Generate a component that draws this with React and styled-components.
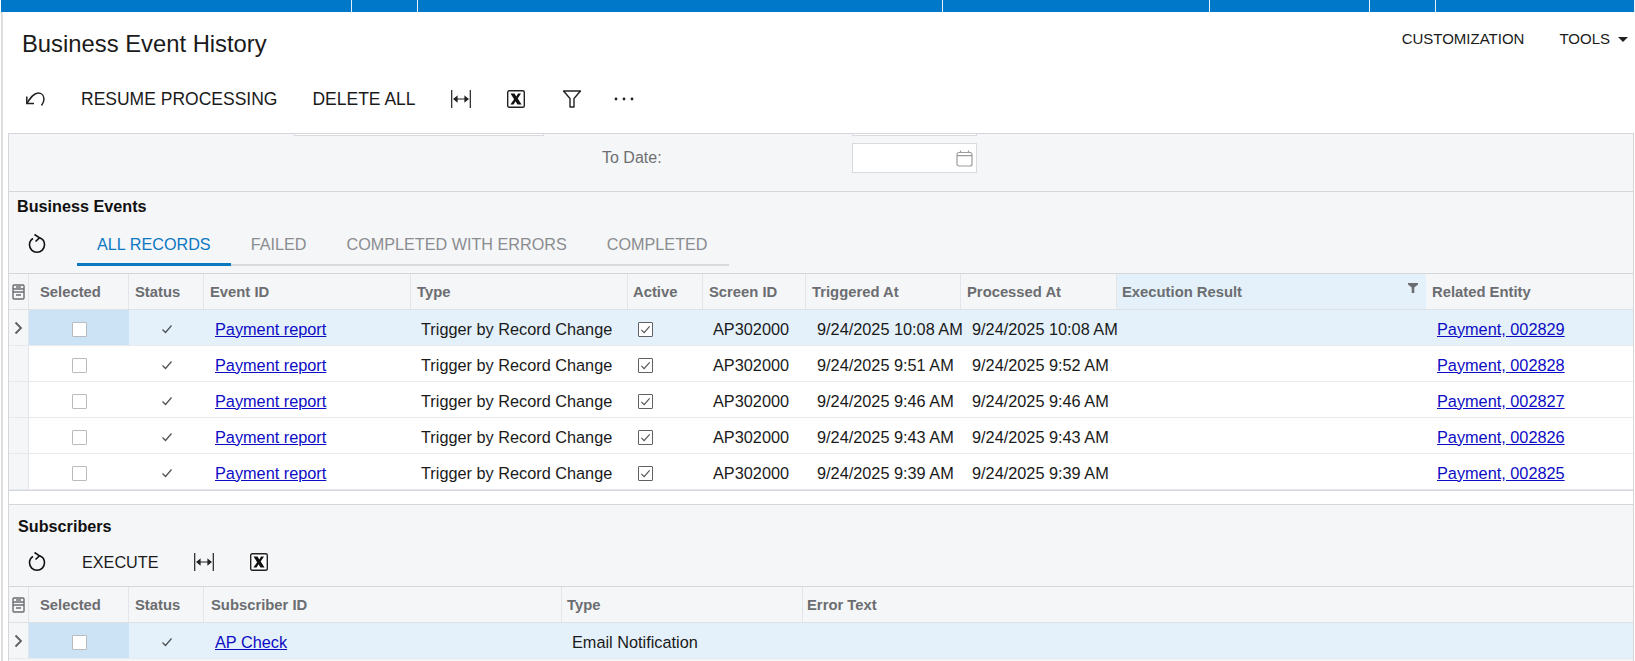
import styled, { createGlobalStyle } from 'styled-components'

const GlobalStyle = createGlobalStyle`
    html, body {
        margin: 0;
        padding: 0;
        background: #fff;
        overflow: hidden;
    }
    body {
        font-family: "Liberation Sans", Arial, sans-serif;
        color: #1a1a1a;
    }
`

const Page = styled.div`
    width: 1635px;
    height: 661px;
    overflow: hidden;
`
const TopBar = styled.div`
    display: flex;
    height: 12px;
    margin-left: 1px;
    background: #0078c9;
`
const TopSegment = styled.div`
    width: ${p => p.$width}px;
    height: 12px;
    box-sizing: border-box;
    border-right: 1px solid #e3f0fa;
`
const Shell = styled.div`
    border-left: 2px solid #dddddd;
    margin-left: 1px;
    padding: 0 1px 0 5px;
    height: 649px;
    box-sizing: border-box;
`
const TitleRow = styled.div`
    display: flex;
    justify-content: space-between;
    height: 65px;
    padding-left: 14px;
`
const Title = styled.h1`
    margin: 0;
    padding-top: 18px;
    font-size: 23.8px;
    line-height: 28px;
    font-weight: 400;
`
const TopActions = styled.div`
    display: flex;
    align-items: flex-start;
    padding-top: 18px;
    font-size: 15px;
    line-height: 18px;
`
const TopAction = styled.span`
    margin-left: ${p => p.$gap}px;
    display: flex;
    align-items: center;
`
const Caret = styled.i`
    width: 0;
    height: 0;
    margin: 0 6px 0 8px;
    border-left: 5px solid transparent;
    border-right: 5px solid transparent;
    border-top: 5px solid #222;
`
const Toolbar = styled.div`
    display: flex;
    align-items: center;
    height: ${p => p.$height || 44}px;
    box-sizing: border-box;
    padding-left: ${p => p.$inset}px;
    padding-top: ${p => p.$top || 0}px;
`
const ToolText = styled.span`
    margin-left: ${p => p.$gap}px;
    font-size: ${p => p.$size || 17.5}px;
    line-height: 22px;
    white-space: nowrap;
`
const ToolIcon = styled.span`
    display: flex;
    margin-left: ${p => p.$gap || 0}px;
`
const Panel = styled.div`
    margin-top: 12px;
    border: 1px solid #d4d6d9;
    border-bottom: none;
    background: #f5f6f8;
    height: 528px;
    box-sizing: border-box;
`
const FormArea = styled.div`
    height: 57px;
    border-bottom: 1px solid #d4d6d9;
`
const ClippedRow = styled.div`
    display: flex;
    height: 2px;
`
const ClippedInput = styled.div`
    margin-left: ${p => p.$left}px;
    width: ${p => p.$width}px;
    height: 2px;
    box-sizing: border-box;
    background: #fff;
    border: 1px solid #d8dadd;
    border-top: none;
`
const FormRow = styled.div`
    display: flex;
    align-items: center;
    margin-top: 7px;
    height: 30px;
`
const FormLabel = styled.span`
    margin-left: 593px;
    width: 250px;
    font-size: 16px;
    color: #6d6f72;
`
const DateInput = styled.div`
    display: flex;
    align-items: center;
    justify-content: flex-end;
    width: 125px;
    height: 30px;
    box-sizing: border-box;
    padding-right: 3px;
    background: #fff;
    border: 1px solid #d8dadd;
`
const SectionTitle = styled.h2`
    margin: 0;
    padding: ${p => p.$top}px 0 0 ${p => p.$left}px;
    font-size: 16.2px;
    line-height: 18px;
    font-weight: 700;
    color: #111;
`
const TabsRow = styled.div`
    display: flex;
    align-items: flex-end;
    height: 51px;
    padding-left: 18px;
`
const RefreshSlot = styled.span`
    display: flex;
    width: 50px;
    align-self: flex-end;
    padding-bottom: 11px;
`
const Tabs = styled.div`
    display: flex;
    width: 652px;
    height: 40px;
    box-sizing: border-box;
    border-bottom: 2px solid #d8dadd;
`
const Tab = styled.div`
    height: 40px;
    box-sizing: border-box;
    padding: 8px 20px 0;
    font-size: 16.2px;
    line-height: 20px;
    white-space: nowrap;
    color: ${p => (p.$active ? '#0b78c2' : '#8a8c8f')};
    border-bottom: ${p => (p.$active ? '3px solid #0b78c2' : 'none')};
`
const Grid = styled.div`
    border-top: 1px solid #d4d6d9;
    margin-top: ${p => p.$top || 0}px;
    background: #fff;
`
const Row = styled.div`
    display: grid;
    grid-template-columns: ${p => p.$columns};
    height: 36px;
    box-sizing: border-box;
    border-bottom: 1px solid #e6eaee;
    background: ${p => (p.$current ? '#e4f1fa' : '#fff')};
`
const HeadRow = styled(Row)`
    background: #f5f6f8;
    border-bottom: 1px solid #dfe2e5;
`
const HeadCell = styled.div`
    display: flex;
    align-items: center;
    justify-content: space-between;
    padding: 1px 2px 0 ${p => p.$left || 6}px;
    box-sizing: border-box;
    border-right: ${p => (p.$last ? 'none' : '1px solid #e3e5e8')};
    background: ${p => (p.$filtered ? '#e4f1fa' : 'transparent')};
    font-size: 14.8px;
    font-weight: 700;
    color: #6b6d70;
    white-space: nowrap;
`
const FilterMark = styled.span`
    display: flex;
    align-self: flex-start;
    margin: 8px 6px 0 0;
`
const Gutter = styled.div`
    display: flex;
    align-items: center;
    justify-content: center;
    background: #f5f6f8;
    border-right: 1px solid #e3e5e8;
`
const Cell = styled.div`
    display: flex;
    align-items: center;
    justify-content: ${p => (p.$center ? 'center' : 'flex-start')};
    padding: 3px 0 0 ${p => (p.$center ? 0 : p.$left || 10)}px;
    font-size: 16.3px;
    white-space: nowrap;
    background: ${p => (p.$marked ? '#cbe3f5' : 'transparent')};
`
const RowLink = styled.a`
    color: #0c0cc4;
    text-decoration: underline;
`
const Box = styled.span`
    display: flex;
    align-items: center;
    justify-content: center;
    width: 15px;
    height: 15px;
    box-sizing: border-box;
    background: #fff;
    border: 1px solid ${p => (p.$checked ? '#5f6164' : '#b9bbbe')};
    border-radius: 1px;
`
const Spacer = styled.div`
    height: 13px;
    background: #fff;
    border-top: 1px solid #d4d6d9;
    border-bottom: 1px solid #d4d6d9;
`

const eventColumns = '20px 100px 75px 207px 217px 75px 103px 155px 156px 309px 207px'
const subscriberColumns = '20px 100px 75px 358px 241px 830px'

const events = [
    { triggered: '9/24/2025 10:08 AM', processed: '9/24/2025 10:08 AM', entity: 'Payment, 002829', current: true },
    { triggered: '9/24/2025 9:51 AM', processed: '9/24/2025 9:52 AM', entity: 'Payment, 002828' },
    { triggered: '9/24/2025 9:46 AM', processed: '9/24/2025 9:46 AM', entity: 'Payment, 002827' },
    { triggered: '9/24/2025 9:43 AM', processed: '9/24/2025 9:43 AM', entity: 'Payment, 002826' },
    { triggered: '9/24/2025 9:39 AM', processed: '9/24/2025 9:39 AM', entity: 'Payment, 002825' },
]

const segments = [351, 66, 525, 267, 160, 66, 199]

const UndoIcon = () => (
    <svg width="21" height="16" viewBox="0 0 21 16" fill="none" stroke="#222" strokeWidth="1.5">
        <path d="M1.8 12.5 C5 7.5 8.5 2 13 2 C16.5 2 19 4.5 19 8 C19 10.5 18 12.5 16.5 14.5" />
        <path d="M1.8 5.5 V12.5 H9" />
    </svg>
)

const RefreshIcon = () => (
    <svg width="20" height="22" viewBox="0 0 20 22" fill="none" stroke="#111" strokeWidth="1.6">
        <path d="M6 5.5 C3.5 7 2.5 9.2 2.5 11.8 C2.5 16 5.8 19.3 10 19.3 C14.2 19.3 17.5 16 17.5 11.8 C17.5 8.5 15.5 5.8 12.5 4.8" />
        <path d="M7.5 1.5 L12.5 4.8 L8.5 8.5" />
    </svg>
)

const FitIcon = () => (
    <svg width="20" height="20" viewBox="0 0 20 20" fill="none" stroke="#222" strokeWidth="1.2">
        <path d="M0.7 1 V19 M19.3 1 V19 M3 10 H17" />
        <path d="M6 7.6 L3 10 L6 12.4 Z M14 7.6 L17 10 L14 12.4 Z" fill="#222" />
    </svg>
)

const ExcelIcon = () => (
    <svg width="18" height="18" viewBox="0 0 18 18">
        <rect x="0.7" y="0.7" width="16.6" height="16.6" rx="1.5" fill="#fff" stroke="#222" strokeWidth="1.4" />
        <path d="M3.5 3.5 H7.5 L9.3 6.5 L11 3.5 H14 L10.7 8.4 L14.6 14.5 H10.5 L8.5 11.3 L6.6 14.5 H3.4 L7.1 9.2 Z" fill="#111" />
    </svg>
)

const FunnelIcon = () => (
    <svg width="20" height="18" viewBox="0 0 20 18" fill="none" stroke="#222" strokeWidth="1.4">
        <path d="M1.5 1 H18.5 L12 8.5 V17 H8 V8.5 Z" strokeLinejoin="round" />
    </svg>
)

const DotsIcon = () => (
    <svg width="20" height="4" viewBox="0 0 20 4" fill="#222">
        <circle cx="2" cy="2" r="1.4" />
        <circle cx="10" cy="2" r="1.4" />
        <circle cx="18" cy="2" r="1.4" />
    </svg>
)

const CalendarIcon = () => (
    <svg width="17" height="17" viewBox="0 0 17 17" fill="none" stroke="#9a9c9f" strokeWidth="1.2">
        <rect x="1" y="2.5" width="15" height="13.5" rx="2" />
        <path d="M1 5.6 H16 M4.5 0.5 V2.5 M12.5 0.5 V2.5" />
    </svg>
)

const CheckIcon = ({ size = 12, color = '#4c4e51' }) => (
    <svg width={size} height={size} viewBox="0 0 12 12" fill="none" stroke={color} strokeWidth="1.2">
        <path d="M1.5 6.5 L4.5 9.5 L10.5 2.5" />
    </svg>
)

const ColumnsIcon = () => (
    <svg width="13" height="16" viewBox="0 0 13 16" fill="none" stroke="#6b6d70" strokeWidth="1.4">
        <rect x="1" y="1" width="11" height="14" rx="1" />
        <path d="M1 5 H12 M1 8 H12 M4 11 H9" />
        <path d="M4 3 H9" />
    </svg>
)

const ChevronIcon = () => (
    <svg width="9" height="14" viewBox="0 0 9 14" fill="none" stroke="#5c5e61" strokeWidth="1.8">
        <path d="M1.5 1.5 L7 7 L1.5 12.5" />
    </svg>
)

const FilterMarkIcon = () => (
    <svg width="10" height="10" viewBox="0 0 10 10" fill="#6b6d70">
        <path d="M0 0 H10 V1.5 L6.3 4.5 V10 H3.7 V4.5 L0 1.5 Z" />
    </svg>
)

const HeadLead = () => (
    <>
        <Gutter><ColumnsIcon /></Gutter>
        <HeadCell $left={11}>Selected</HeadCell>
        <HeadCell>Status</HeadCell>
    </>
)

const RowLead = ({ current }) => (
    <>
        <Gutter>{current && <ChevronIcon />}</Gutter>
        <Cell $center $marked={current}><Box /></Cell>
        <Cell $center><CheckIcon /></Cell>
    </>
)

const App = () => {
    return (
        <Page>
            <GlobalStyle />
            <TopBar>
                {segments.map((width, i) => <TopSegment key={i} $width={width} />)}
            </TopBar>
            <Shell>
                <TitleRow>
                    <Title>Business Event History</Title>
                    <TopActions>
                        <TopAction>CUSTOMIZATION</TopAction>
                        <TopAction $gap={35}>TOOLS<Caret /></TopAction>
                    </TopActions>
                </TitleRow>
                <Toolbar $inset={17}>
                    <ToolIcon><UndoIcon /></ToolIcon>
                    <ToolText $gap={35}>RESUME PROCESSING</ToolText>
                    <ToolText $gap={35}>DELETE ALL</ToolText>
                    <ToolIcon $gap={35}><FitIcon /></ToolIcon>
                    <ToolIcon $gap={36}><ExcelIcon /></ToolIcon>
                    <ToolIcon $gap={37}><FunnelIcon /></ToolIcon>
                    <ToolIcon $gap={32}><DotsIcon /></ToolIcon>
                </Toolbar>
                <Panel>
                    <FormArea>
                        <ClippedRow>
                            <ClippedInput $left={285} $width={250} />
                            <ClippedInput $left={308} $width={125} />
                        </ClippedRow>
                        <FormRow>
                            <FormLabel>To Date:</FormLabel>
                            <DateInput><CalendarIcon /></DateInput>
                        </FormRow>
                    </FormArea>
                    <SectionTitle $top={5} $left={8}>Business Events</SectionTitle>
                    <TabsRow>
                        <RefreshSlot><RefreshIcon /></RefreshSlot>
                        <Tabs>
                            <Tab $active>ALL RECORDS</Tab>
                            <Tab>FAILED</Tab>
                            <Tab>COMPLETED WITH ERRORS</Tab>
                            <Tab>COMPLETED</Tab>
                        </Tabs>
                    </TabsRow>
                    <Grid $top={7}>
                        <HeadRow $columns={eventColumns}>
                            <HeadLead />
                            <HeadCell>Event ID</HeadCell>
                            <HeadCell>Type</HeadCell>
                            <HeadCell $left={5}>Active</HeadCell>
                            <HeadCell $left={6}>Screen ID</HeadCell>
                            <HeadCell>Triggered At</HeadCell>
                            <HeadCell>Processed At</HeadCell>
                            <HeadCell $left={5} $filtered $last>
                                Execution Result
                                <FilterMark><FilterMarkIcon /></FilterMark>
                            </HeadCell>
                            <HeadCell $last>Related Entity</HeadCell>
                        </HeadRow>
                        {events.map(event => (
                            <Row key={event.entity} $columns={eventColumns} $current={event.current}>
                                <RowLead current={event.current} />
                                <Cell $left={11}><RowLink>Payment report</RowLink></Cell>
                                <Cell>Trigger by Record Change</Cell>
                                <Cell><Box $checked><CheckIcon size={11} /></Box></Cell>
                                <Cell>AP302000</Cell>
                                <Cell $left={11}>{event.triggered}</Cell>
                                <Cell $left={11}>{event.processed}</Cell>
                                <Cell />
                                <Cell $left={11}><RowLink>{event.entity}</RowLink></Cell>
                            </Row>
                        ))}
                    </Grid>
                    <Spacer />
                    <SectionTitle $top={12} $left={9}>Subscribers</SectionTitle>
                    <Toolbar $inset={18} $height={51} $top={3}>
                        <ToolIcon><RefreshIcon /></ToolIcon>
                        <ToolText $gap={35} $size={16.2}>EXECUTE</ToolText>
                        <ToolIcon $gap={36}><FitIcon /></ToolIcon>
                        <ToolIcon $gap={36}><ExcelIcon /></ToolIcon>
                    </Toolbar>
                    <Grid>
                        <HeadRow $columns={subscriberColumns}>
                            <HeadLead />
                            <HeadCell $left={7}>Subscriber ID</HeadCell>
                            <HeadCell $left={5}>Type</HeadCell>
                            <HeadCell $left={4} $last>Error Text</HeadCell>
                        </HeadRow>
                        <Row $columns={subscriberColumns} $current>
                            <RowLead current />
                            <Cell $left={11}><RowLink>AP Check</RowLink></Cell>
                            <Cell>Email Notification</Cell>
                            <Cell />
                        </Row>
                    </Grid>
                </Panel>
            </Shell>
        </Page>
    )
}

export default App
